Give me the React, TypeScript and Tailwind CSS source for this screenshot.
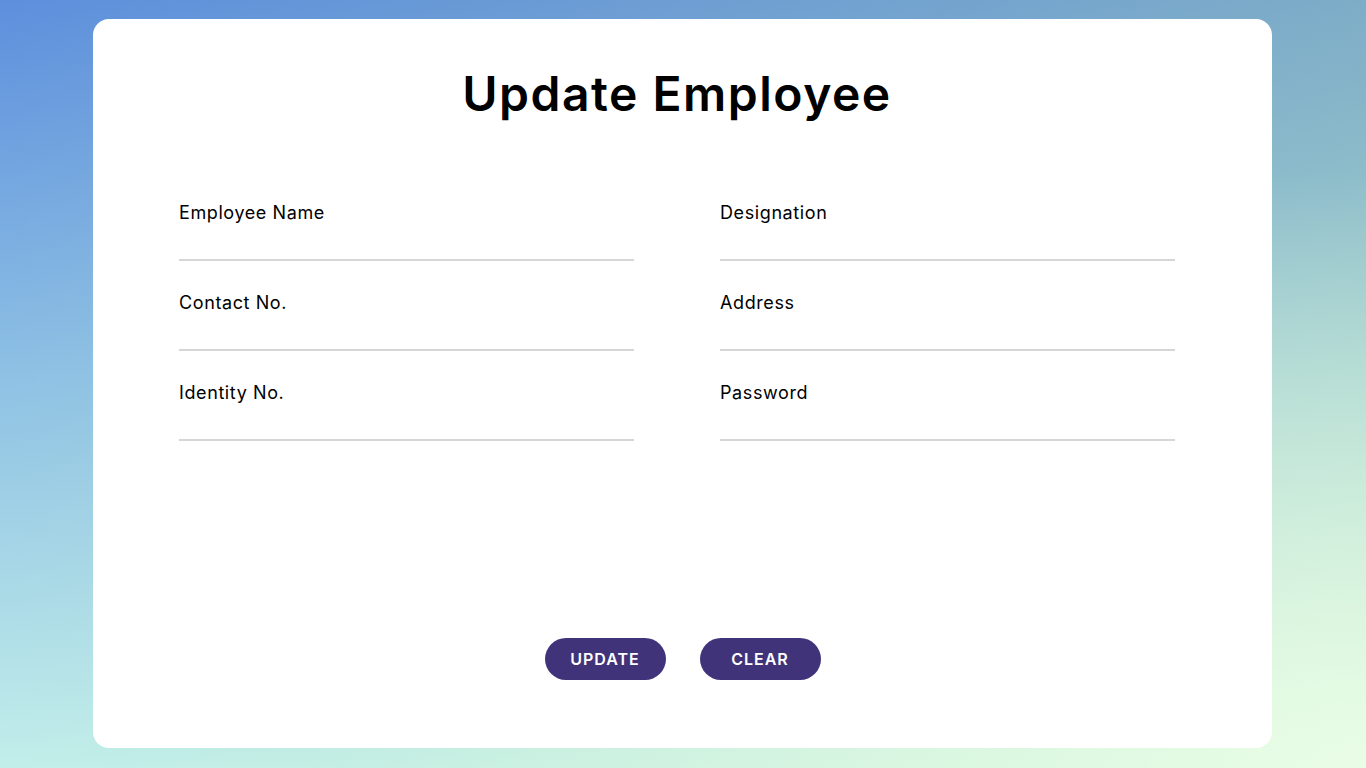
import React from 'react';

const fields = [
  ['Employee Name', 'Designation'],
  ['Contact No.', 'Address'],
  ['Identity No.', 'Password'],
];

const Field = ({ label, type = 'text' }: { label: string; type?: string }) => (
  <label className="flex flex-col">
    <span className="text-[18px] leading-6 tracking-[0.6px] text-black">{label}</span>
    <input
      type={type}
      className="h-[36px] border-b-2 border-[#d6d6d6] bg-transparent text-[16px] outline-none"
    />
  </label>
);

const App = () => {
  return (
    <div
      className="min-h-screen pt-[19px] pl-[93px] bg-[radial-gradient(ellipse_at_100%_100%,rgba(238,255,232,0.9),rgba(238,255,232,0)_55%),linear-gradient(90deg,rgba(200,240,150,0),rgba(200,240,150,0.3)),linear-gradient(180deg,#5d8fdd,#8fc2e4_50%,#c2eeea)]"
      style={{ fontFamily: 'Inter, "Open Sans", sans-serif' }}
    >
      <div className="w-[1179px] h-[729px] bg-white rounded-[16px] flex flex-col pt-[46px] pl-[86px] pr-[97px]">
        <h1 className="text-center text-[48px] leading-[58px] font-semibold text-black tracking-[1.5px]">
          Update Employee
        </h1>

        <form className="mt-[78px] grid grid-cols-[455px_455px] gap-x-[86px] gap-y-[30px]">
          {fields.map(([left, right]) => (
            <React.Fragment key={left}>
              <Field label={left} />
              <Field label={right} type={right === 'Password' ? 'password' : 'text'} />
            </React.Fragment>
          ))}
        </form>

        <div className="mt-[197px] flex justify-center gap-[34px] pl-[11px]">
          <button className="w-[121px] h-[42px] rounded-full bg-[#41337a] text-white text-[16px] font-semibold tracking-[1px]">
            UPDATE
          </button>
          <button className="w-[121px] h-[42px] rounded-full bg-[#41337a] text-white text-[16px] font-semibold tracking-[1px]">
            CLEAR
          </button>
        </div>
      </div>
    </div>
  );
};

export default App;
